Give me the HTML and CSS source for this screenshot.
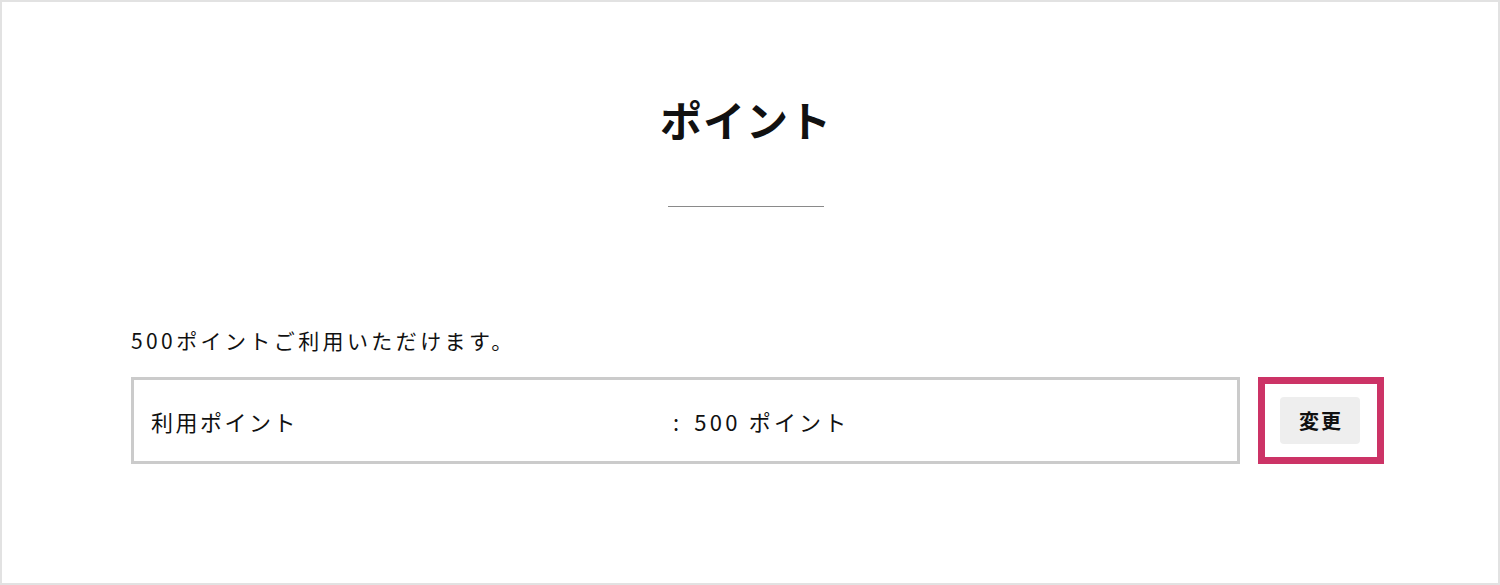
FILE: index.html
```html
<!DOCTYPE html>
<html lang="ja">
<head>
    <meta charset="UTF-8">
    <meta name="viewport" content="width=device-width, initial-scale=1.0">
    <title>ポイント</title>
    <link rel="stylesheet" href="styles.css">
</head>
<body>

    <div class="page">
        <h1 class="title">ポイント</h1>
        <div class="rule"></div>

        <div class="points">
            <p class="intro">500ポイントご利用いただけます。</p>

            <div class="points-row">
                <div class="points-box">
                    <span class="points-label">利用ポイント</span>
                    <span class="points-value"><span class="colon">:</span>500 ポイント</span>
                </div>
                <div class="change-wrap">
                    <button class="change-btn">変更</button>
                </div>
            </div>
        </div>
    </div>

</body>
</html>
```

FILE: styles.css
```css
body {
    margin: 0;
    font-family: 'Noto Sans CJK JP', 'Noto Sans', sans-serif;
    color: #111;
    background: #fff;
}

.page {
    width: 1500px;
    height: 585px;
    box-sizing: border-box;
    border: 2px solid #e2e2e2;
    padding: 85px 8px 0 0;
}

.title {
    margin: 0;
    font-size: 42px;
    line-height: 63px;
    font-weight: bold;
    text-align: center;
    letter-spacing: 1px;
}

.rule {
    width: 156px;
    height: 1px;
    background: #8a8a8a;
    margin: 56px auto 0;
}

.points {
    padding: 0 106px 0 129px;
}

.intro {
    margin: 117px 0 0;
    font-size: 21px;
    line-height: 32px;
    letter-spacing: 3.4px;
}

.points-row {
    display: flex;
    gap: 18px;
    margin-top: 21px;
}

.points-box {
    flex: 1;
    display: flex;
    align-items: center;
    height: 87px;
    box-sizing: border-box;
    border: 3px solid #cbcbcb;
    padding-left: 17px;
    font-size: 22px;
    letter-spacing: 2.5px;
}

.points-label {
    width: 522px;
}

.points-value {
    letter-spacing: 3.2px;
}

.colon {
    margin-right: 12px;
}

.change-wrap {
    width: 126px;
    height: 87px;
    box-sizing: border-box;
    border: 7px solid #cc3366;
    display: flex;
    align-items: center;
    justify-content: center;
    padding-right: 2px;
}

.change-btn {
    width: 80px;
    height: 47px;
    border: none;
    border-radius: 4px;
    background: #eeeeee;
    font-family: inherit;
    font-size: 20px;
    font-weight: bold;
    letter-spacing: 2px;
    color: #111;
    padding: 0 0 0 2px;
}
```
